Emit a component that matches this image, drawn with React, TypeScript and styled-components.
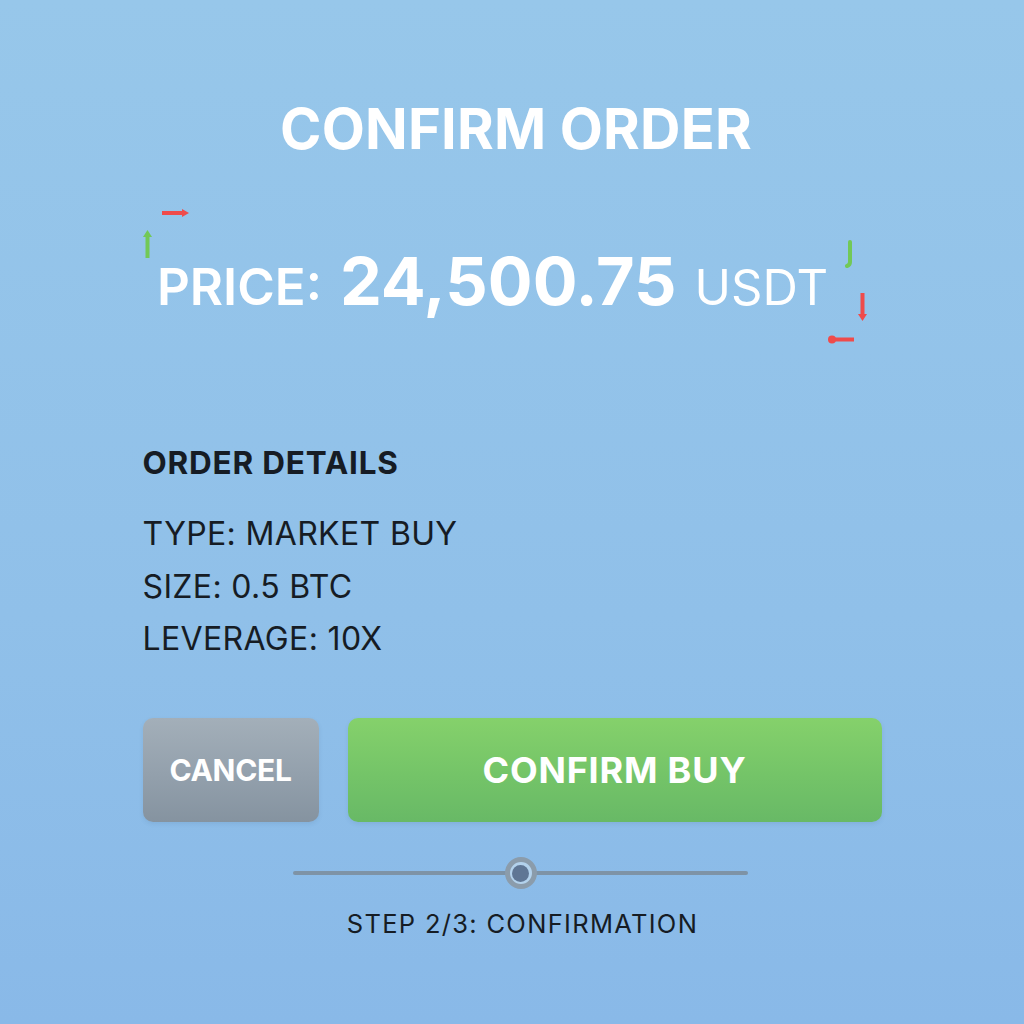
import React from "react";
import styled, { createGlobalStyle } from "styled-components";

const GlobalStyle = createGlobalStyle`
  html, body { margin: 0; padding: 0; }
  body { font-family: Inter, "Noto Sans", "Liberation Sans", sans-serif; }
`;

const Page = styled.main`
  min-height: 100vh;
  display: flex;
  flex-direction: column;
  align-items: center;
  background: linear-gradient(180deg, #97c7ea 0%, #90c0e9 60%, #89b9e8 100%);
`;

const Title = styled.h1`
  margin: 94px 0 0 8px;
  font-size: 56px;
  line-height: 70px;
  font-weight: 700;
  letter-spacing: 0.2px;
  color: #ffffff;
`;

const PriceSection = styled.section`
  position: relative;
  width: 100%;
  height: 150px;
  margin-top: 36px;
`;

const PriceRow = styled.div`
  margin-top: 48px;
  padding-right: 39px;
  display: flex;
  justify-content: center;
  align-items: baseline;
  gap: 18px;
  color: #ffffff;
  line-height: 1;
`;

const PriceLabel = styled.span`
  font-size: 51px;
  font-weight: 600;
`;

const PriceValue = styled.span`
  font-size: 66.5px;
  font-weight: 700;
`;

const PriceUnit = styled.span`
  font-size: 49px;
  font-weight: 400;
`;

const Tick = styled.svg<{ $x: number; $y: number }>`
  position: absolute;
  left: ${(p) => p.$x}px;
  top: ${(p) => p.$y}px;
  overflow: visible;
`;

const RED = "#ef4b4b";
const GREEN = "#72c957";

const Details = styled.section`
  width: 739px;
  margin-top: 93px;
  color: #161c24;
`;

const DetailsHeading = styled.h2`
  margin: 0 0 25px;
  font-size: 31.5px;
  line-height: 40px;
  font-weight: 700;
  letter-spacing: 0.8px;
`;

const DetailLine = styled.div`
  font-size: 32px;
  line-height: 52.7px;
  font-weight: 400;
  letter-spacing: 0.35px;
`;

const Actions = styled.div`
  width: 739px;
  margin-top: 52px;
  display: grid;
  grid-template-columns: 176px 1fr;
  gap: 29px;
`;

const ActionButton = styled.button<{ $variant: "cancel" | "confirm" }>`
  height: 104px;
  border: none;
  border-radius: 10px;
  color: #ffffff;
  font-family: inherit;
  font-weight: 700;
  font-size: ${(p) => (p.$variant === "confirm" ? "36px" : "30px")};
  letter-spacing: ${(p) => (p.$variant === "confirm" ? "0.8px" : "-0.3px")};
  background: ${(p) =>
    p.$variant === "confirm"
      ? "linear-gradient(180deg, #85d16b 0%, #74c468 55%, #68b966 100%)"
      : "linear-gradient(180deg, #a3afb9 0%, #93a0ac 55%, #8593a0 100%)"};
  box-shadow: 0 2px 4px rgba(60, 90, 120, 0.12);
  cursor: pointer;
`;

const Stepper = styled.div`
  position: relative;
  width: 455px;
  height: 32px;
  margin-top: 35px;
  margin-left: 16px;
  display: flex;
  align-items: center;
  justify-content: center;
`;

const Track = styled.div`
  width: 100%;
  height: 4px;
  border-radius: 2px;
  background: #7e93a6;
`;

const Knob = styled.div`
  position: absolute;
  left: 212px;
  top: 0;
  width: 22px;
  height: 22px;
  border: 5px solid #8b9cab;
  border-radius: 50%;
  background: #b3d2ec;
  display: flex;
  align-items: center;
  justify-content: center;
  &::after {
    content: "";
    width: 17px;
    height: 17px;
    border-radius: 50%;
    background: #5f7694;
  }
`;

const StepLabel = styled.div`
  margin: 20px 0 0 21px;
  font-size: 25.5px;
  line-height: 30px;
  letter-spacing: 1.3px;
  color: #161c24;
`;

export default function App() {
  return (
    <>
      <GlobalStyle />
      <Page>
        <Title>CONFIRM ORDER</Title>

        <PriceSection>
          <Tick $x={162} $y={9} width="27" height="8" viewBox="0 0 27 8">
            <path d="M0 4 H21" stroke={RED} strokeWidth="4" />
            <path d="M20 0 L27 4 L20 8 Z" fill={RED} />
          </Tick>
          <Tick $x={143} $y={30} width="9" height="28" viewBox="0 0 9 28">
            <path d="M4.5 6 V28" stroke={GREEN} strokeWidth="4" />
            <path d="M0 7 L4.5 0 L9 7 Z" fill={GREEN} />
          </Tick>
          <Tick $x={845} $y={42} width="8" height="25" viewBox="0 0 8 25">
            <path d="M5 0 V20 Q5 23 2 24" stroke={GREEN} strokeWidth="4" fill="none" strokeLinecap="round" />
          </Tick>
          <Tick $x={858} $y={93} width="9" height="28" viewBox="0 0 9 28">
            <path d="M4.5 0 V22" stroke={RED} strokeWidth="4" />
            <path d="M0 21 L4.5 28 L9 21 Z" fill={RED} />
          </Tick>
          <Tick $x={828} $y={135} width="27" height="9" viewBox="0 0 27 9">
            <path d="M5 4.5 H26" stroke={RED} strokeWidth="4" />
            <circle cx="4" cy="4.5" r="4" fill={RED} />
          </Tick>

          <PriceRow>
            <PriceLabel>PRICE:</PriceLabel>
            <PriceValue>24,500.75</PriceValue>
            <PriceUnit>USDT</PriceUnit>
          </PriceRow>
        </PriceSection>

        <Details>
          <DetailsHeading>ORDER DETAILS</DetailsHeading>
          <DetailLine>TYPE: MARKET BUY</DetailLine>
          <DetailLine>SIZE: 0.5 BTC</DetailLine>
          <DetailLine>LEVERAGE: 10X</DetailLine>
        </Details>

        <Actions>
          <ActionButton $variant="cancel">CANCEL</ActionButton>
          <ActionButton $variant="confirm">CONFIRM BUY</ActionButton>
        </Actions>

        <Stepper>
          <Track />
          <Knob />
        </Stepper>

        <StepLabel>STEP 2/3: CONFIRMATION</StepLabel>
      </Page>
    </>
  );
}
